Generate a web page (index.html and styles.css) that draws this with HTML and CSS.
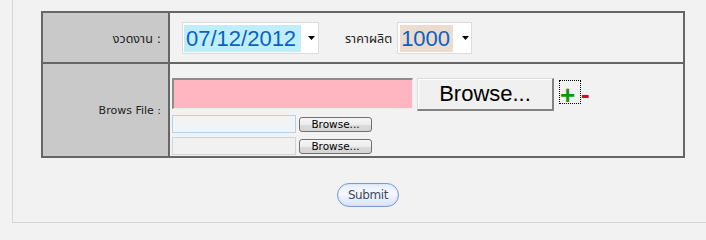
FILE: index.html
```html
<!DOCTYPE html>
<html lang="th">
<head>
<meta charset="utf-8">
<title>Upload</title>
<link rel="stylesheet" href="styles.css">
</head>
<body>
<div class="panel">
  <form class="form">
    <div class="grid">
      <div class="label label-th">งวดงาน :</div>
      <div class="cell cell-period">
        <div class="select select-date">
          <span class="value value-date">07/12/2012</span>
          <svg class="arrow" width="7" height="4" viewBox="0 0 7 4"><polygon points="0,0 7,0 3.5,4" fill="#000"/></svg>
        </div>
        <span class="field-label">ราคาผลิต</span>
        <div class="select select-price">
          <span class="value value-price">1000</span>
          <svg class="arrow" width="7" height="4" viewBox="0 0 7 4"><polygon points="0,0 7,0 3.5,4" fill="#000"/></svg>
        </div>
      </div>
      <div class="label">Brows File :</div>
      <div class="cell cell-files">
        <div class="file-row file-row-main">
          <input class="file-text file-text-main" type="text" readonly>
          <button class="browse-big" type="button">Browse...</button>
          <a class="add" href="#">+</a>
          <a class="remove" href="#">-</a>
        </div>
        <div class="file-row">
          <input class="file-text file-text-hover" type="text" readonly>
          <button class="browse" type="button">Browse...</button>
        </div>
        <div class="file-row">
          <input class="file-text" type="text" readonly>
          <button class="browse" type="button">Browse...</button>
        </div>
      </div>
    </div>
    <div class="actions">
      <button class="submit" type="button">Submit</button>
    </div>
  </form>
</div>
</body>
</html>
```

FILE: styles.css
```css
html, body {
  margin: 0;
  padding: 0;
  overflow: hidden;
  background: #f2f2f2;
}

body {
  font-family: "DejaVu Sans", "Noto Sans Thai", "Noto Sans", sans-serif;
  font-size: 11px;
  color: #222;
}

.panel {
  margin-left: 12px;
  width: 710px;
  height: 222px;
  border-left: 1px solid #d6d6d6;
  border-bottom: 1px solid #d6d6d6;
  background: #f2f2f2;
}

.form {
  margin: 0;
  padding: 11px 0 0 0;
}

.grid {
  margin-left: 28px;
  width: 640px;
  display: grid;
  grid-template-columns: 125px 513px;
  grid-template-rows: 49px 92px;
  gap: 2px;
  padding: 2px;
  background: #666666;
}

.label {
  background: #c9c9c9;
  display: flex;
  align-items: center;
  justify-content: flex-end;
  padding-right: 7px;
  white-space: nowrap;
}

.label-th {
  font-size: 12.5px;
  padding-top: 3px;
}

.cell {
  background: #f2f2f2;
}

.cell-period {
  display: flex;
  align-items: center;
  padding-left: 12px;
}

.select {
  box-sizing: border-box;
  height: 32px;
  border: 1px solid #dcdcdc;
  background: #fff;
  display: flex;
  align-items: center;
  padding-left: 1px;
}

.select-date {
  width: 137px;
}

.select-price {
  width: 75px;
  padding-left: 2px;
}

.value {
  box-sizing: border-box;
  height: 27px;
  line-height: 27px;
  font-family: "Liberation Sans", Arial, sans-serif;
  font-size: 22px;
  color: #0862c6;
  padding-left: 2px;
  margin-top: 1px;
}

.value-date {
  width: 117px;
  background: #bfeefa;
}

.value-price {
  width: 53px;
  padding-left: 1px;
  background: #ecdccf;
}

.arrow {
  margin-left: 7px;
  display: block;
}

.select-price .arrow {
  margin-left: 9px;
}

.field-label {
  font-size: 12.5px;
  margin-left: 26px;
  margin-right: 5px;
  padding-top: 3px;
  white-space: nowrap;
}

.cell-files {
  display: flex;
  flex-direction: column;
  gap: 4px;
  padding: 14px 0 0 2px;
}

.file-row {
  display: flex;
  align-items: center;
}

.file-row-main {
  align-items: flex-start;
}

.file-text {
  box-sizing: border-box;
  width: 124px;
  height: 18px;
  margin: 0;
  padding: 0;
  border: 1px solid #d4d4d4;
  background: #f1f1f1;
  outline: none;
}

.file-text-hover {
  border-color: #b6d2ea;
  background: #f1f3f5;
}

.file-text-main {
  width: 241px;
  height: 31px;
  border-style: solid;
  border-width: 2px 1px 1px 2px;
  border-color: #8c8c8c #ececec #ececec #8c8c8c;
  background: #ffb6c1;
}

.browse-big {
  box-sizing: border-box;
  width: 137px;
  height: 33px;
  margin: 0 0 0 4px;
  padding: 0;
  border-style: solid;
  border-width: 1px 2px 2px 1px;
  border-color: #dadada #838383 #838383 #dadada;
  box-shadow: inset 1px 1px 0 #ffffff;
  background: #f0f0f0;
  font-family: "Liberation Sans", Arial, sans-serif;
  font-size: 22px;
  color: #000;
  line-height: 30px;
}

.add {
  box-sizing: border-box;
  width: 22px;
  height: 24px;
  margin: 2px 0 0 5px;
  border: 1px dotted #000;
  display: block;
  overflow: visible;
  padding-left: 0;
  font-family: "Liberation Sans", Arial, sans-serif;
  font-weight: bold;
  font-size: 26px;
  line-height: 22px;
  padding-top: 3px;
  color: #0a9a0a;
  text-decoration: none;
}

.remove {
  display: block;
  margin-top: 2px;
  font-family: "Liberation Sans", Arial, sans-serif;
  font-weight: bold;
  font-size: 26px;
  line-height: 22px;
  padding-top: 3px;
  color: #e2001e;
  text-decoration: none;
}

.browse {
  box-sizing: border-box;
  width: 73px;
  height: 15px;
  margin: 0 0 0 3px;
  padding: 0;
  border: 1px solid #707070;
  border-radius: 3px;
  background: linear-gradient(to bottom, #f6f6f6 0%, #ececec 50%, #dcdcdc 51%, #d4d4d4 100%);
  font-family: "DejaVu Sans", sans-serif;
  font-size: 10.5px;
  line-height: 13px;
  color: #000;
}

.actions {
  display: flex;
  justify-content: center;
  margin-top: 25px;
}

.submit {
  box-sizing: border-box;
  width: 62px;
  height: 24px;
  margin: 0;
  padding: 0;
  border: 1px solid #7c9ad8;
  border-radius: 12px;
  background: linear-gradient(to bottom, #e6edfb 0%, #f7f9fe 45%, #eef2fc 55%, #d9e3f7 100%);
  box-shadow: inset 0 0 2px #c3d2f1;
  font-family: "DejaVu Sans", sans-serif;
  font-size: 12px;
  letter-spacing: -0.4px;
  color: #3e4a5c;
}
```
